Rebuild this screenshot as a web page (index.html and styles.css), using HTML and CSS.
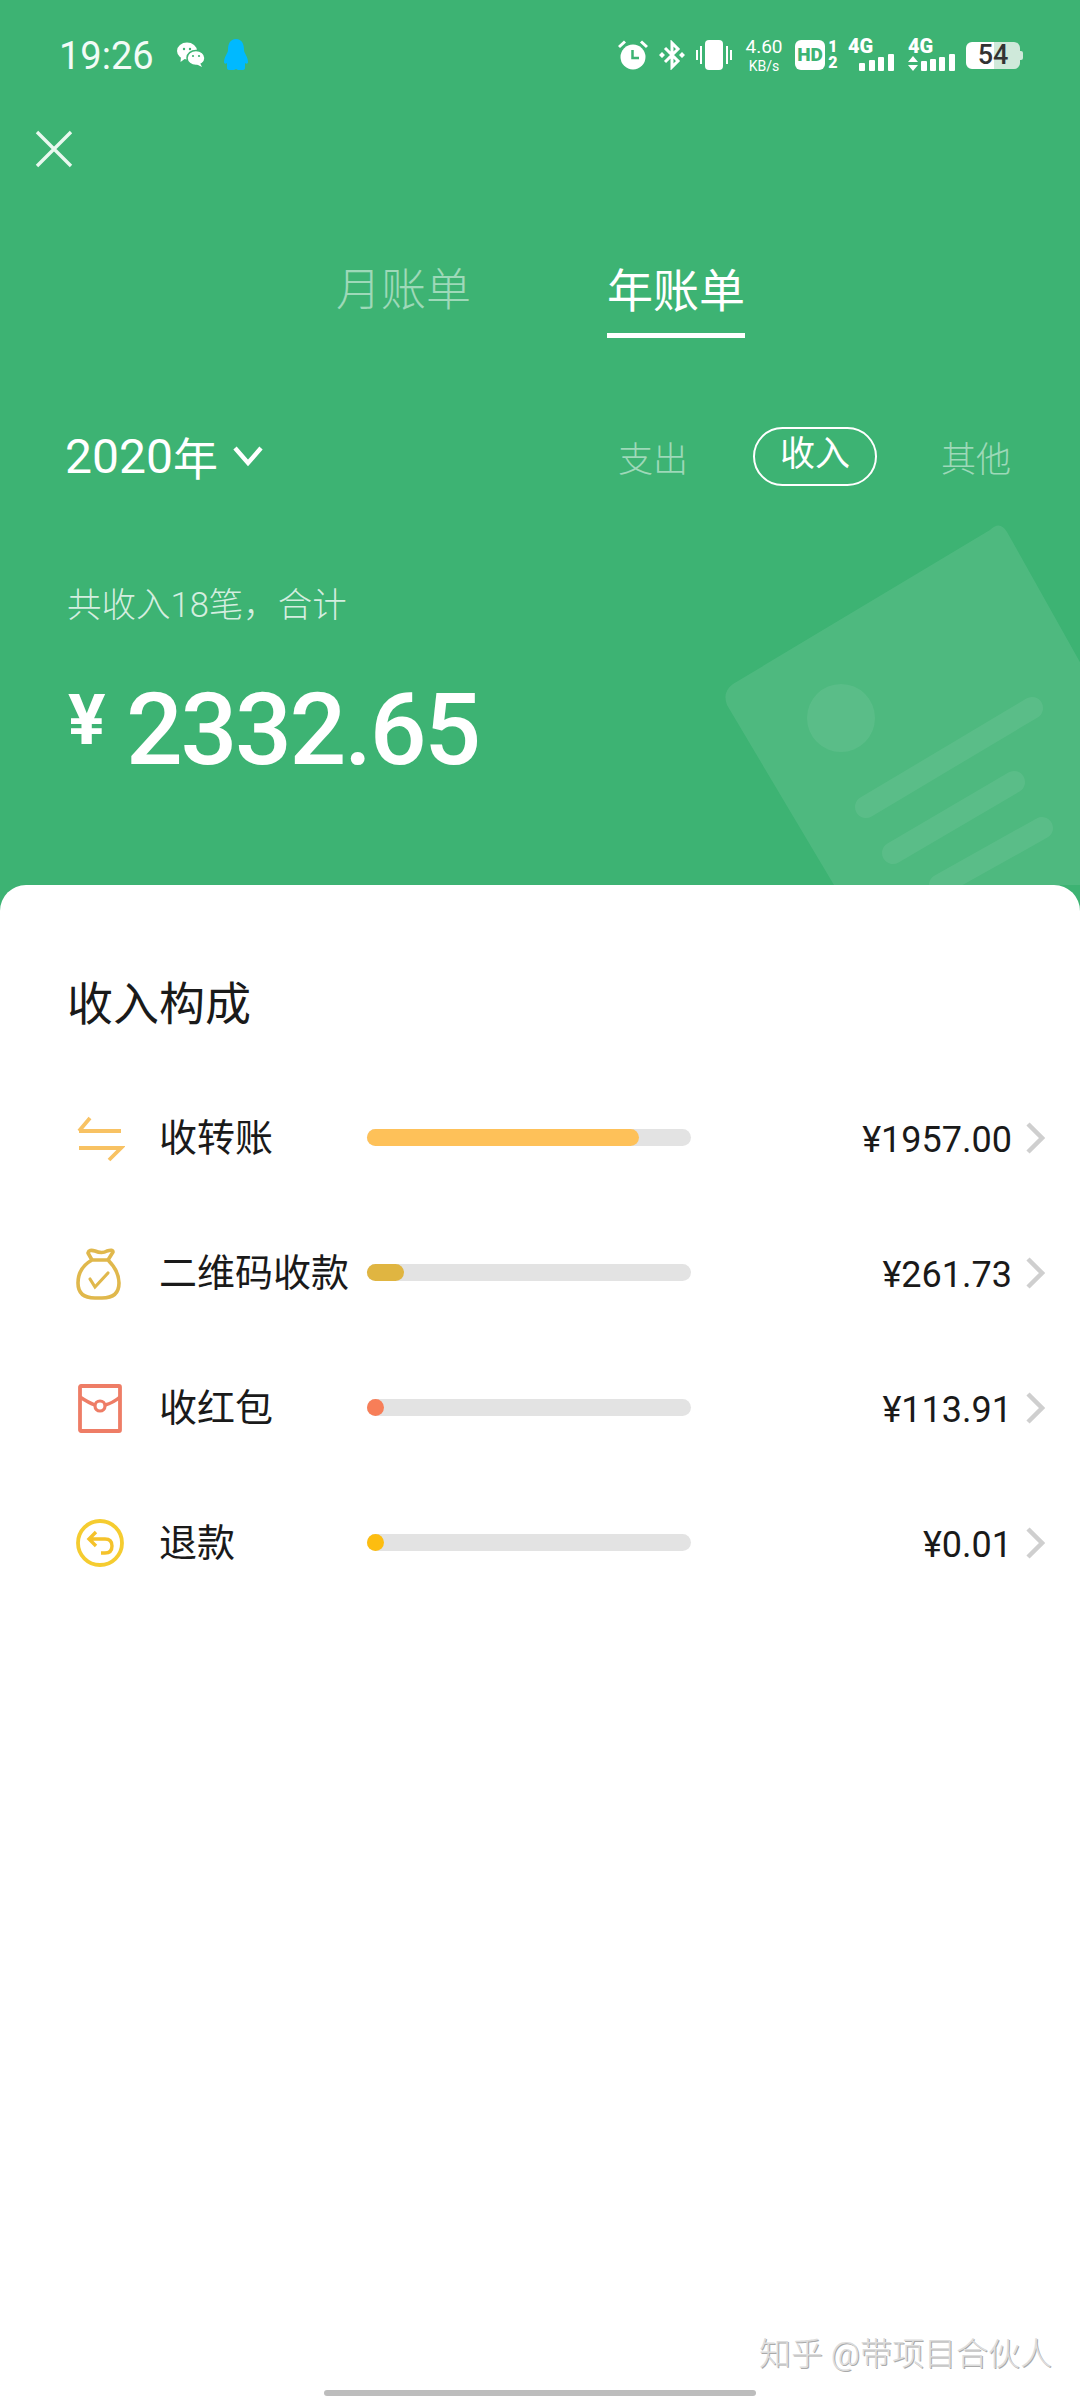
FILE: index.html
```html
<!DOCTYPE html>
<html lang="zh-CN">
<head>
    <meta charset="UTF-8">
    <meta name="viewport" content="width=device-width, initial-scale=1.0">
    <title>年账单</title>
    <link rel="stylesheet" href="styles.css">
</head>
<body>
<div class="page">
    <!-- decorative bill behind the header -->
    <svg class="bill" width="1080" height="885" viewBox="0 0 1080 885">
        <path d="M990 530 Q1000 520 1007 532 L1090 680 L1090 885 L834 885 L727 705 Q722 692 733 684 Z" fill="#fff" fill-opacity="0.09"/>
        <circle cx="841" cy="718" r="34" fill="#fff" fill-opacity="0.07"/>
        <g stroke="#fff" stroke-opacity="0.07" stroke-width="22" stroke-linecap="round">
            <line x1="866" y1="807" x2="1032" y2="708"/>
            <line x1="893" y1="853" x2="1014" y2="782"/>
            <line x1="940" y1="885" x2="1042" y2="828"/>
        </g>
    </svg>

    <div class="status">
        <span class="time">19:26</span>
        <svg class="st-wechat" width="28" height="26" viewBox="0 0 28 26">
            <ellipse cx="10" cy="9" rx="10" ry="8.5" fill="#fff"/>
            <path d="M4 15 L3.5 20 L9 16 Z" fill="#fff"/>
            <ellipse cx="19" cy="16" rx="9" ry="7.5" fill="#fff" stroke="#3db373" stroke-width="1.5"/>
            <path d="M23 21 L25 25 L19 22 Z" fill="#fff"/>
            <circle cx="7" cy="7" r="1.2" fill="#3db373"/>
            <circle cx="13" cy="7" r="1.2" fill="#3db373"/>
            <circle cx="16" cy="14" r="1.1" fill="#3db373"/>
            <circle cx="22" cy="14" r="1.1" fill="#3db373"/>
        </svg>
        <svg class="st-qq" width="24" height="32" viewBox="0 0 24 32">
            <path d="M12 0 C18 0 20 5 20 11 C20 14 24 18 24 23 C24 25 22 25 21 24 L21 29 Q21 31 18 31 L14 31 L12 30 L10 31 L6 31 Q3 31 3 29 L3 24 C2 25 0 25 0 23 C0 18 4 14 4 11 C4 5 6 0 12 0 Z" fill="#00b9ff"/>
        </svg>

        <div class="status-right">
            <svg class="st-alarm" width="30" height="30" viewBox="0 0 30 30">
                <circle cx="15" cy="17" r="12.5" fill="#fff"/>
                <path d="M1 7 L7 1.5 M29 7 L23 1.5" stroke="#fff" stroke-width="3"/>
                <path d="M14.5 10 V18 H21" stroke="#3db373" stroke-width="2.5" fill="none"/>
            </svg>
            <svg class="st-bt" width="26" height="30" viewBox="0 0 26 30">
                <path d="M6 8 L19 21 L13 27 V3 L19 9 L6 22" stroke="#fff" stroke-width="3" fill="none"/>
                <path d="M3 12 L6 15 L3 18 L0 15 Z M23 12 L26 15 L23 18 L20 15 Z" fill="#fff"/>
            </svg>
            <svg class="st-vib" width="36" height="30" viewBox="0 0 36 30">
                <rect x="9" y="0" width="18" height="30" rx="4" fill="#fff"/>
                <path d="M1 10 V20 M5 6 V24 M31 6 V24 M35 10 V20" stroke="#fff" stroke-width="2"/>
            </svg>
            <div class="st-speed"><span>4.60</span><span class="st-unit">KB/s</span></div>
            <span class="st-hd">HD</span>
            <div class="st-sim"><span>1</span><span>2</span></div>
            <div class="st-net">
                <span class="st-4g">4G</span>
                <svg width="36" height="18" viewBox="0 0 36 18">
                    <rect x="0" y="9" width="6" height="8" rx="1" fill="#fff"/>
                    <rect x="10" y="6" width="6" height="11" rx="1" fill="#fff"/>
                    <rect x="19" y="3" width="6" height="14" rx="1" fill="#fff"/>
                    <rect x="29" y="0" width="6" height="17" rx="1" fill="#fff"/>
                </svg>
            </div>
            <div class="st-net st-net2">
                <span class="st-4g">4G</span>
                <svg width="48" height="18" viewBox="0 0 48 18">
                    <path d="M0 8 L5 2 L10 8 Z M0 11 L10 11 L5 17 Z" fill="#fff"/>
                    <rect x="13" y="7" width="6" height="10" rx="1" fill="#fff"/>
                    <rect x="22" y="5" width="6" height="12" rx="1" fill="#fff"/>
                    <rect x="31" y="3" width="6" height="14" rx="1" fill="#fff"/>
                    <rect x="41" y="0" width="6" height="17" rx="1" fill="#fff"/>
                </svg>
            </div>
            <div class="st-battery"><span>54</span></div>
        </div>
    </div>

    <div class="close-row">
        <svg width="38" height="38" viewBox="0 0 38 38">
            <path d="M2 2 L36 36 M36 2 L2 36" stroke="#e9f8ef" stroke-width="3.4" fill="none"/>
        </svg>
    </div>

    <div class="tabs">
        <div class="tab">月账单</div>
        <div class="tab tab-active">年账单</div>
    </div>

    <div class="filter-row">
        <div class="year">
            <span class="year-num">2020</span><span class="year-unit">年</span>
            <svg width="32" height="26" viewBox="0 0 32 26">
                <path d="M3 5 L16 20 L29 5" stroke="#fff" stroke-width="4.4" fill="none"/>
            </svg>
        </div>
        <div class="types">
            <span class="type">支出</span>
            <span class="type type-active">收入</span>
            <span class="type">其他</span>
        </div>
    </div>

    <div class="hint">共收入18笔，合计</div>
    <div class="total"><span class="total-sign">¥</span><span class="total-num">2332.65</span></div>

    <div class="sheet">
        <h2 class="sheet-title">收入构成</h2>

        <div class="row">
            <svg class="row-icon" width="50" height="50" viewBox="0 0 50 50">
                <path d="M4 18 H46 M4 18 L15 5 M4 35 H46 L34 47" stroke="#f8c263" stroke-width="3.8" fill="none"/>
            </svg>
            <span class="row-label">收转账</span>
            <div class="track"><div class="fill fill-transfer" style="width: 272px"></div></div>
            <span class="row-amount">¥1957.00</span>
            <svg class="row-arrow" width="20" height="32" viewBox="0 0 20 32">
                <path d="M3 2 L17 16 L3 30" stroke="#cfcfcf" stroke-width="4.5" fill="none"/>
            </svg>
        </div>

        <div class="row">
            <svg class="row-icon" width="50" height="56" viewBox="0 0 50 56">
                <path d="M17 15 C8 20 3 28 3 38 C3 49 10 53 20 53 H27 C37 53 44 49 44 38 C44 28 38 20 33 15 Z" stroke="#e0b84c" stroke-width="3.6" fill="none"/>
                <path d="M17 15 L13 8 Q14 4 20 6 Q27 9 32 6 Q38 4 38 7 L33 15" stroke="#e0b84c" stroke-width="3.6" fill="none" stroke-linejoin="round"/>
                <path d="M15 34 L20 42 L33 28" stroke="#e0b84c" stroke-width="3.2" fill="none" stroke-linecap="round"/>
            </svg>
            <span class="row-label">二维码收款</span>
            <div class="track"><div class="fill fill-qr" style="width: 37px"></div></div>
            <span class="row-amount">¥261.73</span>
            <svg class="row-arrow" width="20" height="32" viewBox="0 0 20 32">
                <path d="M3 2 L17 16 L3 30" stroke="#cfcfcf" stroke-width="4.5" fill="none"/>
            </svg>
        </div>

        <div class="row">
            <svg class="row-icon" width="50" height="50" viewBox="0 0 50 50">
                <rect x="5" y="3" width="40" height="45" rx="1" stroke="#ee7d66" stroke-width="3.8" fill="none"/>
                <path d="M5 14 Q14 20 20 22 M30 22 Q38 20 45 14" stroke="#ee7d66" stroke-width="3.4" fill="none"/>
                <circle cx="25" cy="23" r="5" stroke="#ee7d66" stroke-width="3.2" fill="none"/>
            </svg>
            <span class="row-label">收红包</span>
            <div class="track"><div class="fill fill-packet" style="width: 17px"></div></div>
            <span class="row-amount">¥113.91</span>
            <svg class="row-arrow" width="20" height="32" viewBox="0 0 20 32">
                <path d="M3 2 L17 16 L3 30" stroke="#cfcfcf" stroke-width="4.5" fill="none"/>
            </svg>
        </div>

        <div class="row">
            <svg class="row-icon" width="50" height="50" viewBox="0 0 50 50">
                <circle cx="25" cy="25" r="22" stroke="#f5cc30" stroke-width="3.8" fill="none"/>
                <path d="M21 14 L14 21 L21 28 M14 21 H30 Q37 21 37 28 Q37 35 30 35 H26" stroke="#f5c22a" stroke-width="3.4" fill="none"/>
            </svg>
            <span class="row-label">退款</span>
            <div class="track"><div class="fill fill-refund" style="width: 17px"></div></div>
            <span class="row-amount">¥0.01</span>
            <svg class="row-arrow" width="20" height="32" viewBox="0 0 20 32">
                <path d="M3 2 L17 16 L3 30" stroke="#cfcfcf" stroke-width="4.5" fill="none"/>
            </svg>
        </div>

        <div class="credit">知乎 @带项目合伙人</div>
        <div class="home-bar"></div>
    </div>
</div>
</body>
</html>
```

FILE: styles.css
```css
* {
    box-sizing: border-box;
}
body {
    margin: 0;
    font-family: Roboto, "Noto Sans CJK SC", sans-serif;
    color: #fff;
}
.page {
    position: relative;
    width: 1080px;
    height: 2400px;
    display: flex;
    flex-direction: column;
    background-color: #3db373;
    overflow: hidden;
}
.bill {
    position: absolute;
    top: 0;
    left: 0;
}

/* status bar */
.status {
    position: relative;
    height: 110px;
    display: flex;
    align-items: center;
    padding-left: 59px;
}
.time {
    font-size: 38px;
    width: 118px;
    margin-top: 2px;
    color: #f2fbf6;
}
.st-qq {
    margin-left: 19px;
}
.status-right {
    margin-left: auto;
    padding-right: 60px;
    display: flex;
    align-items: center;
}
.st-bt {
    margin-left: 11px;
}
.st-vib {
    margin-left: 11px;
}
.st-speed {
    margin-left: 12px;
    width: 40px;
    display: flex;
    flex-direction: column;
    align-items: center;
    font-size: 19px;
    line-height: 22px;
    white-space: nowrap;
}
.st-unit {
    font-size: 14px;
    line-height: 16px;
}
.st-hd {
    margin-left: 11px;
    width: 30px;
    height: 30px;
    background-color: #fff;
    border-radius: 6px;
    color: #3db373;
    font-size: 19px;
    font-weight: 900;
    line-height: 30px;
    text-align: center;
}
.st-sim {
    margin-left: 2px;
    width: 12px;
    display: flex;
    flex-direction: column;
    align-items: center;
    font-size: 16px;
    font-weight: 900;
    line-height: 16px;
}
.st-net {
    margin-left: 9px;
    width: 47px;
    height: 34px;
    display: flex;
    flex-direction: column;
    align-items: flex-end;
}
.st-net2 {
    margin-left: 13px;
    width: 48px;
}
.st-4g {
    align-self: flex-start;
    height: 16px;
    font-size: 20px;
    font-weight: 900;
    line-height: 16px;
}
.st-battery {
    margin-left: 10px;
    position: relative;
    width: 54px;
    height: 27px;
    border-radius: 6px;
    background: linear-gradient(to right, #fff 52%, #cfe9da 52%);
    color: #333;
    font-size: 27px;
    font-weight: 500;
    line-height: 27px;
    text-align: center;
}
.st-battery::after {
    content: "";
    position: absolute;
    right: -3px;
    top: 9px;
    width: 3px;
    height: 9px;
    border-radius: 0 2px 2px 0;
    background-color: #cfe9da;
}

.close-row {
    position: relative;
    height: 74px;
    padding: 20px 0 0 35px;
}

/* month / year tabs */
.tabs {
    position: relative;
    height: 154px;
    padding-top: 74px;
    display: flex;
    padding-left: 336px;
    gap: 135px;
}
.tab {
    font-size: 45px;
    font-weight: 300;
    line-height: 66px;
    height: 80px;
    width: 136px;
    white-space: nowrap;
    color: rgba(255, 255, 255, 0.5);
}
.tab-active {
    width: 138px;
    color: #fff;
    font-size: 46px;
    font-weight: 400;
    border-bottom: 5px solid #fff;
}

/* year picker and type filter */
.filter-row {
    position: relative;
    height: 58px;
    margin-top: 89px;
    display: flex;
    align-items: center;
    justify-content: space-between;
    padding: 0 69px 0 65px;
}
.year {
    display: flex;
    align-items: center;
}
.year-num {
    font-size: 48px;
    font-weight: 400;
}
.year-unit {
    font-size: 45px;
}
.year svg {
    margin-left: 14px;
}
.types {
    display: flex;
    align-items: center;
}
.type {
    font-size: 35px;
    font-weight: 300;
    color: rgba(255, 255, 255, 0.5);
}
.type-active {
    width: 124px;
    height: 59px;
    margin: 0 64px 0 65px;
    border: 2px solid #fff;
    border-radius: 30px;
    color: #fff;
    font-weight: 400;
    line-height: 52px;
    text-align: center;
}

.hint {
    position: relative;
    margin-top: 96px;
    padding-left: 67px;
    font-size: 34.5px;
    font-weight: 300;
    line-height: 48px;
    color: rgba(255, 255, 255, 0.78);
}
.total {
    position: relative;
    margin-top: 44px;
    padding-left: 68px;
    height: 120px;
    display: flex;
    align-items: center;
}
.total-sign {
    font-size: 70px;
    font-weight: 700;
    width: 58px;
    margin-top: -26px;
}
.total-num {
    margin-top: -8px;
    font-size: 100px;
    font-weight: 500;
    letter-spacing: -2.3px;
}

/* white sheet */
.sheet {
    position: absolute;
    top: 885px;
    left: 0;
    right: 0;
    bottom: 0;
    display: flex;
    flex-direction: column;
    background-color: #fff;
    border-radius: 26px 26px 0 0;
    color: #1a1a1a;
}
.sheet-title {
    margin: 87px 0 34px 67px;
    font-size: 46px;
    font-weight: 400;
    line-height: 64px;
}
.row {
    height: 135px;
    flex-shrink: 0;
    display: flex;
    align-items: center;
    padding: 0 35px 0 75px;
}
.row-icon {
    width: 50px;
    flex-shrink: 0;
}
.row-label {
    width: 242px;
    padding-left: 34px;
    font-size: 38px;
    white-space: nowrap;
    margin-top: -6px;
}
.track {
    width: 324px;
    height: 17px;
    border-radius: 9px;
    background-color: #e3e3e3;
}
.fill {
    height: 100%;
    border-radius: 9px;
}
.fill-transfer {
    background-color: #fec159;
}
.fill-qr {
    background-color: #e0b541;
}
.fill-packet {
    background-color: #f77e58;
}
.fill-refund {
    background-color: #fdbd10;
}
.row-amount {
    flex: 1;
    margin: 4px 0 0;
    text-align: right;
    font-size: 36px;
}
.row-arrow {
    margin-left: 13px;
    flex-shrink: 0;
}
.credit {
    margin-top: auto;
    padding-right: 28px;
    text-align: right;
    font-size: 32px;
    font-weight: 300;
    line-height: 44px;
    color: #ddd;
    text-shadow: 1px 1px 0 #aaa;
}
.home-bar {
    width: 432px;
    height: 6px;
    margin: 14px 0 4px 324px;
    border-radius: 3px;
    background-color: #bdbdbd;
}
```
